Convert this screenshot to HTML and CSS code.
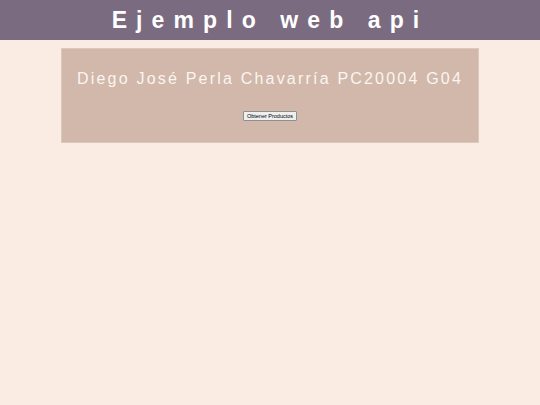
FILE: index.html
```html
<!DOCTYPE html>
<html lang="es">
<head>
<meta charset="utf-8">
<title>Ejemplo web api</title>
<link rel="stylesheet" href="styles.css">
</head>
<body>
<header class="top">
  <h1 class="title">Ejemplo web api</h1>
</header>
<main class="card">
  <h2 class="name">Diego José Perla Chavarría PC20004 G04</h2>
  <button class="btn" type="button">Obtener Productos</button>
</main>
</body>
</html>
```
FILE: styles.css
```css
html, body {
  margin: 0;
  padding: 0;
}
body {
  background: #faece3;
  font-family: "Liberation Sans", Arial, sans-serif;
  min-height: 405px;
}
.top {
  background: #7b6b80;
  height: 40px;
  display: flex;
  align-items: center;
  justify-content: center;
}
.title {
  margin: 0;
  color: #ffffff;
  font-size: 23px;
  font-weight: bold;
  letter-spacing: 9.1px;
}
.card {
  width: 418px;
  margin: 8px auto 0;
  height: 95px;
  box-sizing: border-box;
  background: #d1b8aa;
  border: 1px solid #dcc8bc;
  display: flex;
  flex-direction: column;
  align-items: center;
  padding-top: 21px;
}
.name {
  margin: 0;
  color: #fbf5f1;
  font-size: 16px;
  font-weight: normal;
  letter-spacing: 2.2px;
}
.btn {
  margin-top: 23px;
  font-family: "Liberation Sans", Arial, sans-serif;
  font-size: 5.5px;
  padding: 1px 3px;
  background: #efefef;
  border: 1px solid #8f8f8f;
  border-radius: 1px;
  color: #000;
}
```
